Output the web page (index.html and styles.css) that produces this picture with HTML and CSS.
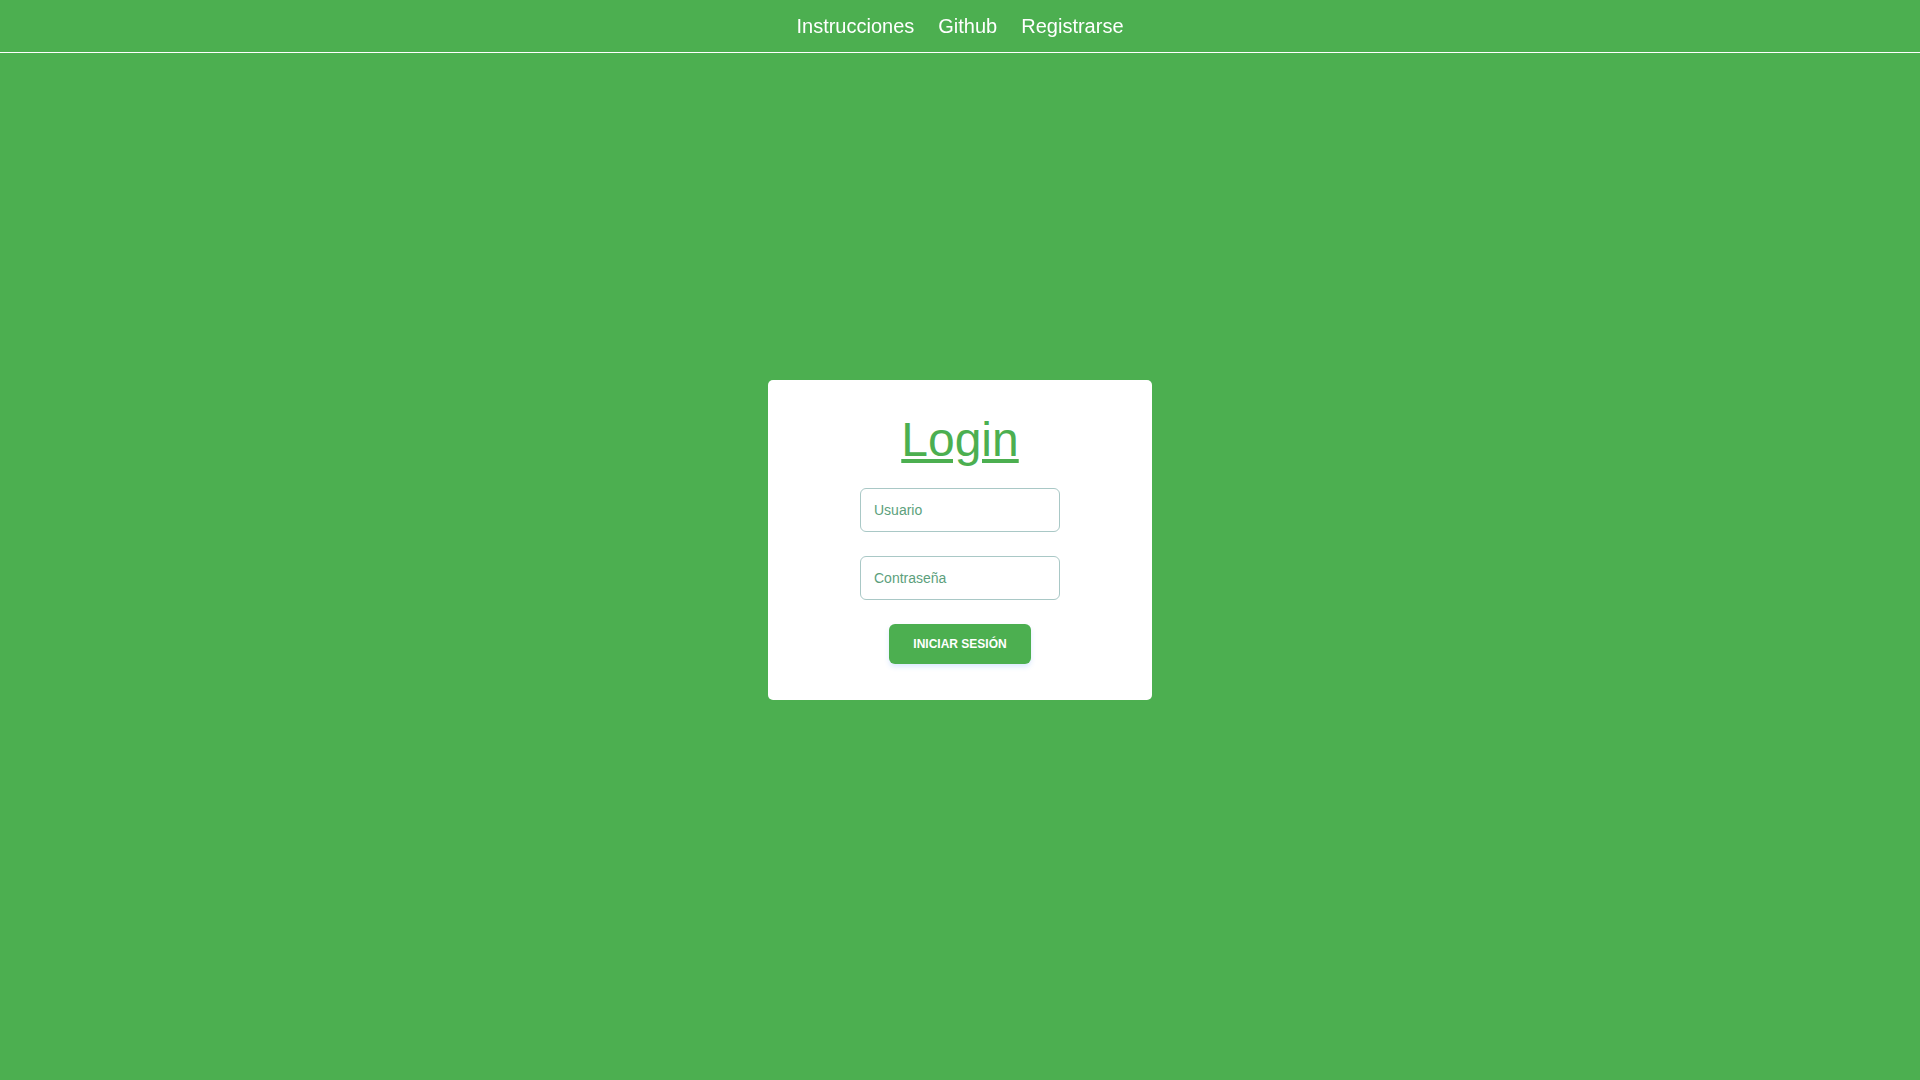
FILE: index.html
```html
<!DOCTYPE html>
<html lang="es">
<head>
<meta charset="utf-8">
<title>Login</title>
<link rel="stylesheet" href="styles.css">
</head>
<body>
<nav class="topbar">
  <a class="nav-link" href="#">Instrucciones</a>
  <a class="nav-link" href="#">Github</a>
  <a class="nav-link" href="#">Registrarse</a>
</nav>
<main class="page">
  <form class="card">
    <h1 class="title">Login</h1>
    <input class="field" type="text" placeholder="Usuario">
    <input class="field" type="password" placeholder="Contraseña">
    <button class="btn" type="button">INICIAR SESIÓN</button>
  </form>
</main>
</body>
</html>
```
FILE: styles.css
```css
* { box-sizing: border-box; }
html, body { margin: 0; padding: 0; }
body {
  background: #4caf50;
  font-family: "Liberation Sans", Arial, sans-serif;
  height: 100vh;
  overflow: hidden;
}
.topbar {
  position: fixed;
  top: 0;
  left: 0;
  right: 0;
  display: flex;
  justify-content: center;
  gap: 24px;
  padding: 15px 0 14px;
  border-bottom: 1px solid #ffffff;
}
.nav-link {
  color: #ffffff;
  text-decoration: none;
  font-size: 20px;
  line-height: 23px;
}
.page {
  height: 100vh;
  display: flex;
  align-items: center;
  justify-content: center;
}
.card {
  width: 384px;
  height: 320px;
  background: #ffffff;
  border-radius: 5px;
  padding: 32px 0 36px;
  display: flex;
  flex-direction: column;
  align-items: center;
}
.title {
  margin: 0 0 21px;
  font-size: 48px;
  line-height: 55px;
  font-weight: normal;
  color: #4caf50;
  text-decoration: underline;
}
.field {
  width: 200px;
  height: 44px;
  border: 1px solid #a9c8c6;
  border-radius: 6px;
  padding: 0 13px;
  font-family: "Liberation Sans", Arial, sans-serif;
  font-size: 14px;
  color: #333;
  outline: none;
  margin-bottom: 24px;
}
.field::placeholder { color: #5c9f7c; }
.btn {
  width: 142px;
  height: 40px;
  border: none;
  border-radius: 6px;
  background: #4caf50;
  color: #ffffff;
  font-family: "Liberation Sans", Arial, sans-serif;
  font-weight: bold;
  font-size: 12px;
  box-shadow: 0 3px 5px rgba(60, 140, 255, 0.18);
  cursor: pointer;
}
```
